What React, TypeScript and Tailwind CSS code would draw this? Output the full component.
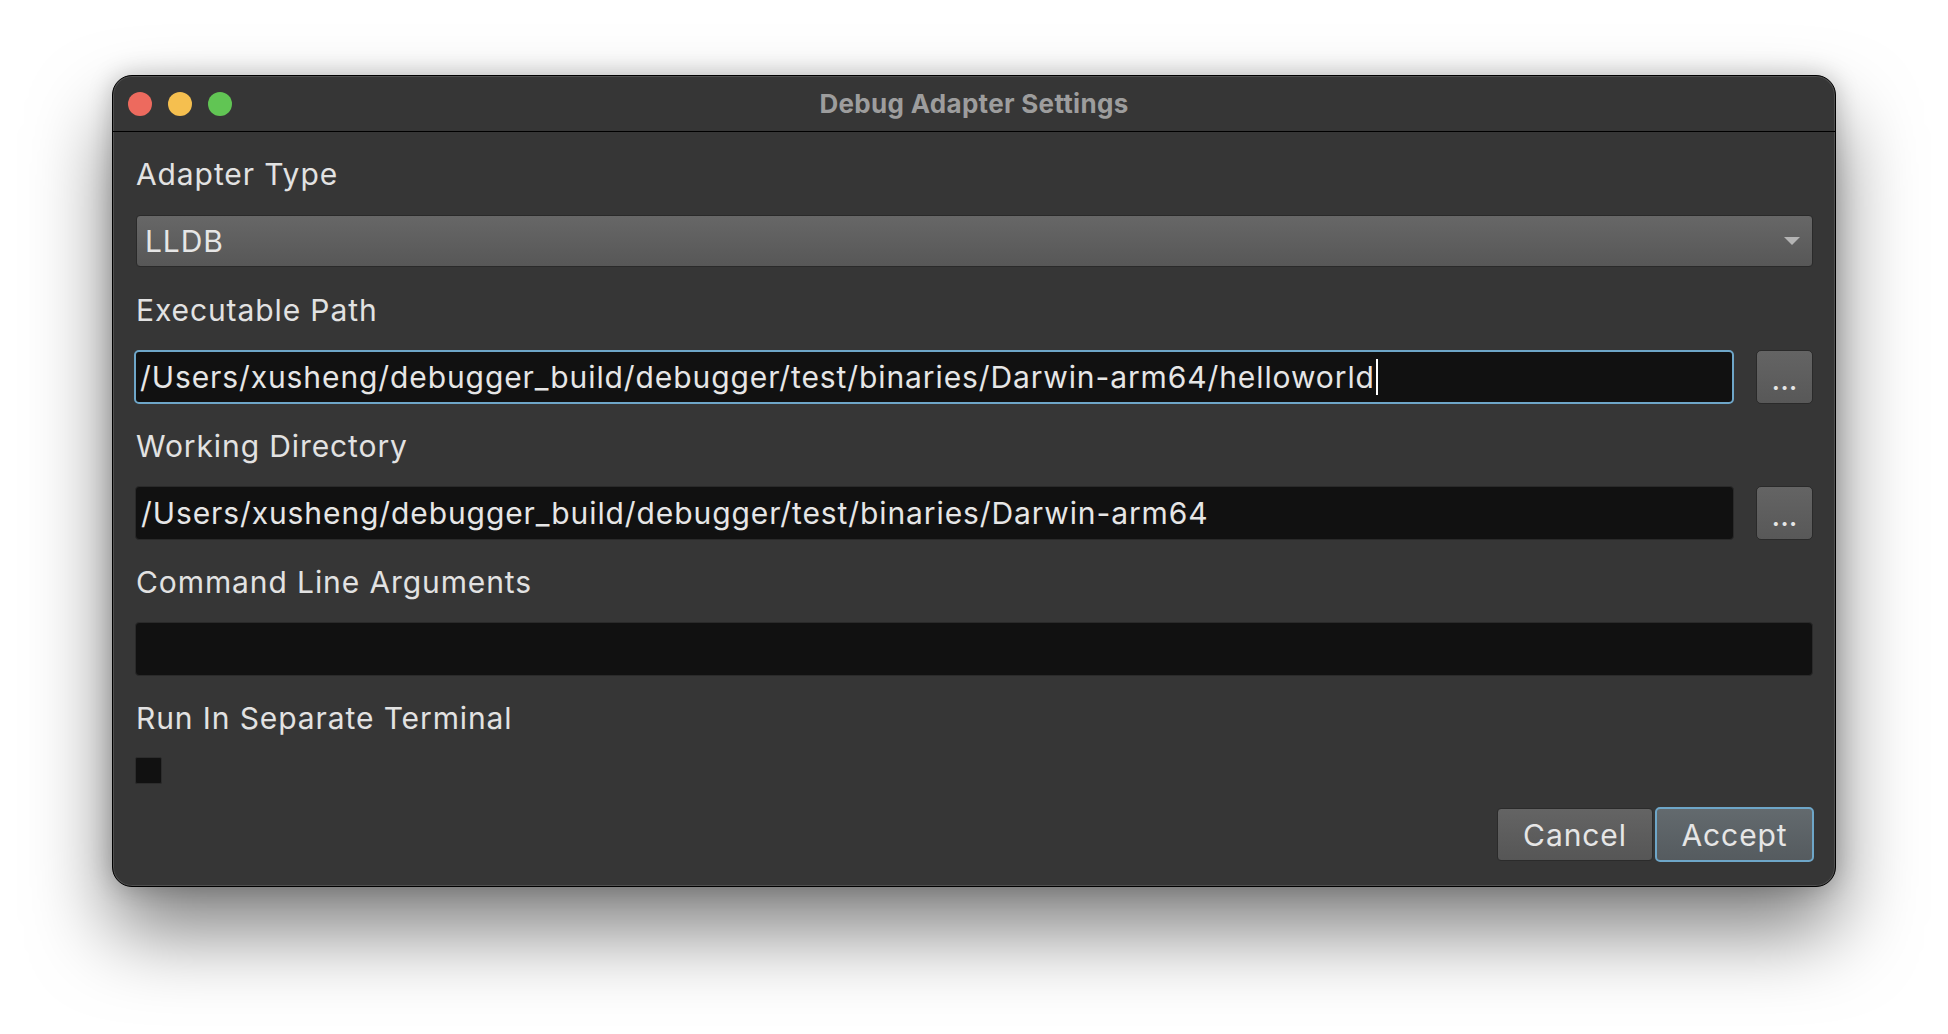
import React from 'react';

function Label({ children, className = '' }: { children: React.ReactNode; className?: string }) {
  return (
    <div className={`text-[30px] leading-[36px] tracking-[0.9px] text-[#e2e2e2] ${className}`}>{children}</div>
  );
}

function BrowseButton() {
  return (
    <button className="ml-[22px] flex h-[54px] w-[57px] shrink-0 items-center justify-center rounded-[5px] border border-[#2a2a2a] bg-gradient-to-b from-[#646464] to-[#585858] pt-[3px] text-[30px] leading-[36px] text-[#e6e6e6]">
      ...
    </button>
  );
}

export default function App() {
  return (
    <div className="min-h-screen bg-white pl-[112px] pt-[75px] font-['Inter',sans-serif]">
      <div className="w-[1724px] overflow-hidden rounded-[20px] border border-black bg-[#363636] shadow-[inset_0_0_0_1px_rgba(255,255,255,0.13),0_0_24px_rgba(0,0,0,0.22),0_44px_80px_rgba(0,0,0,0.5)]">
        {/* title bar */}
        <div className="grid h-[56px] grid-cols-[1fr_auto_1fr] items-center border-b border-black">
          <div className="flex items-center gap-[16px] pl-[15px]">
            <span className="h-[24px] w-[24px] rounded-full bg-[#ed6a5e]" />
            <span className="h-[24px] w-[24px] rounded-full bg-[#f5bf4f]" />
            <span className="h-[24px] w-[24px] rounded-full bg-[#61c554]" />
          </div>
          <div className="text-[26px] font-bold leading-[32px] tracking-[0.3px] text-[#9d9d9d]">
            Debug Adapter Settings
          </div>
          <div />
        </div>

        {/* body */}
        <div className="flex flex-col pb-[23px] pl-[23px] pr-[22px] pt-[24px]">
          <Label>Adapter Type</Label>
          <div className="mt-[23px] flex h-[52px] items-center justify-between rounded-[4px] border border-[#2a2a2a] bg-gradient-to-b from-[#676767] to-[#575757] pl-[8px] pr-[12px]">
            <span className="text-[30px] leading-[36px] tracking-[0.9px] text-[#e6e6e6]">LLDB</span>
            <svg width="16" height="8" viewBox="0 0 16 8">
              <path d="M0 0h16L8 8z" fill="#b4b4b4" />
            </svg>
          </div>

          <Label className="mt-[25px]">Executable Path</Label>
          <div className="mt-[22px] flex h-[54px]">
            <div className="-ml-[2px] flex flex-1 items-center rounded-[5px] border-2 border-[#6ea6c8] bg-[#111111] pl-[4px]">
              <span className="whitespace-nowrap text-[30px] leading-[36px] tracking-[0.9px] text-[#e6e6e6]">
                /Users/xusheng/debugger_build/debugger/test/binaries/Darwin-arm64/helloworld
              </span>
              <span className="ml-[1px] inline-block h-[36px] w-[2px] bg-white" />
            </div>
            <BrowseButton />
          </div>

          <Label className="mt-[24px]">Working Directory</Label>
          <div className="mt-[22px] flex h-[54px]">
            <div className="-ml-[1px] flex flex-1 items-center rounded-[4px] border border-[#2a2a2a] bg-[#111111] pl-[5px]">
              <span className="whitespace-nowrap text-[30px] leading-[36px] tracking-[0.9px] text-[#e6e6e6]">
                /Users/xusheng/debugger_build/debugger/test/binaries/Darwin-arm64
              </span>
            </div>
            <BrowseButton />
          </div>

          <Label className="mt-[24px]">Command Line Arguments</Label>
          <div className="-ml-[1px] mt-[22px] h-[54px] rounded-[4px] border border-[#2a2a2a] bg-[#111111]" />

          <Label className="mt-[24px]">Run In Separate Terminal</Label>
          <div className="-ml-[1px] mt-[21px] h-[27px] w-[27px] rounded-[2px] border border-[#2c2c2c] bg-[#111111]" />

          <div className="mt-[24px] flex justify-end gap-[2px]">
            <button className="flex h-[53px] w-[156px] items-center justify-center rounded-[4px] border border-[#2b2b2b] bg-gradient-to-b from-[#646464] to-[#565656] text-[30px] leading-[36px] tracking-[0.9px] text-[#e6e6e6]">
              Cancel
            </button>
            <button className="-mr-[1px] flex h-[55px] w-[159px] -translate-y-[1px] items-center justify-center rounded-[5px] border-2 border-[#6ea6c8] bg-gradient-to-b from-[#636a6e] to-[#555b5f] text-[30px] leading-[36px] tracking-[0.9px] text-[#e6e6e6]">
              Accept
            </button>
          </div>
        </div>
      </div>
    </div>
  );
}
